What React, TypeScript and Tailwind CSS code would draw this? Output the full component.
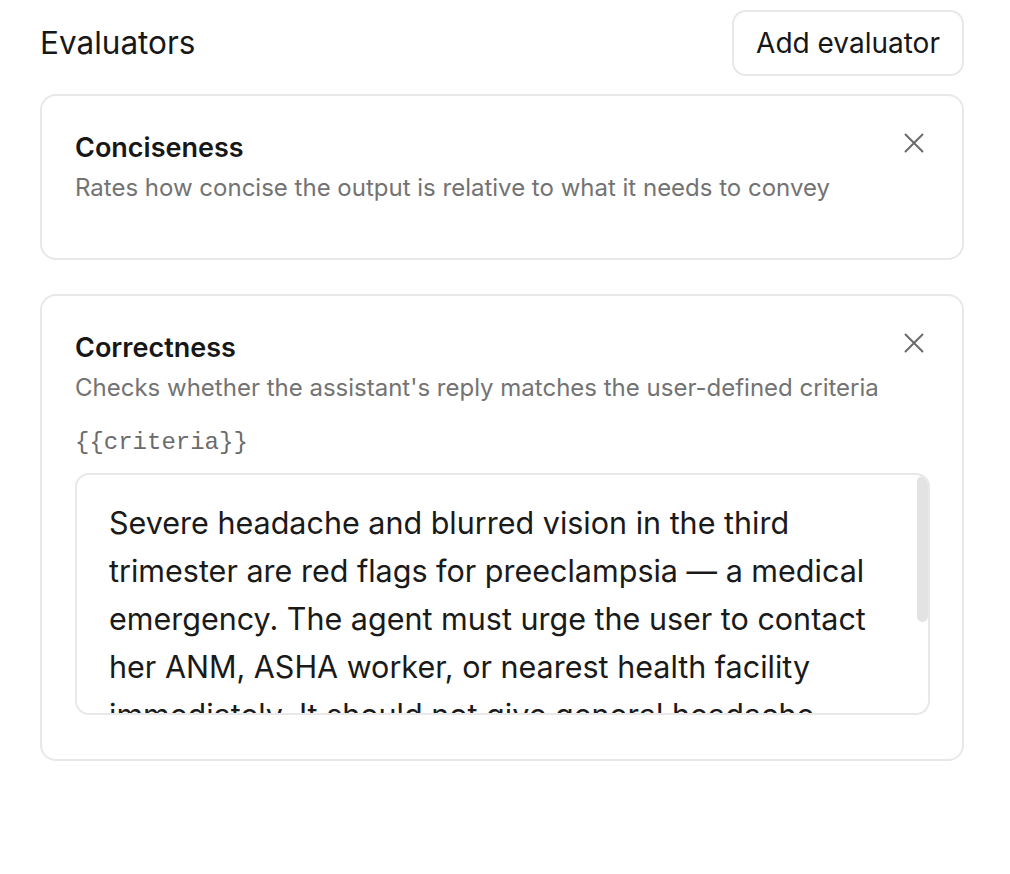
import React from "react";

type Evaluator = {
  name: string;
  description: string;
  variable?: string;
  value?: string;
};

const evaluators: Evaluator[] = [
  {
    name: "Conciseness",
    description: "Rates how concise the output is relative to what it needs to convey",
  },
  {
    name: "Correctness",
    description: "Checks whether the assistant's reply matches the user-defined criteria",
    variable: "{{criteria}}",
    value:
      "Severe headache and blurred vision in the third trimester are red flags for preeclampsia — a medical emergency. The agent must urge the user to contact her ANM, ASHA worker, or nearest health facility immediately. It should not give general headache remedies or suggest waiting to see if symptoms improve.",
  },
];

function CloseIcon() {
  return (
    <svg width="20" height="20" viewBox="0 0 20 20" fill="none" stroke="currentColor" strokeWidth="2" strokeLinecap="round">
      <path d="M1.5 1.5l17 17M18.5 1.5l-17 17" />
    </svg>
  );
}

function EvaluatorCard({ ev }: { ev: Evaluator }) {
  return (
    <div
      className={
        ev.variable
          ? "rounded-[16px] border-2 border-[#e8e8e8] bg-white pl-[33px] pr-[32px] pt-[35px] pb-[44px]"
          : "rounded-[16px] border-2 border-[#e8e8e8] bg-white pl-[33px] pr-[32px] pt-[35px] pb-[54px]"
      }
    >
      <div className="flex items-start justify-between">
        <div className="flex flex-col">
          <div className="text-[27px] leading-[34px] font-semibold text-[#171717]">{ev.name}</div>
          <div className="mt-[7px] text-[24px] leading-[32px] text-[#737373]">{ev.description}</div>
        </div>
        <button className="mt-[2px] mr-[6px] text-[#6b6b6b]">
          <CloseIcon />
        </button>
      </div>
      {ev.variable ? (
        <div className="mt-[24px] flex flex-col">
          <div
            className="text-[24px] leading-[30px] text-[#6b6b6b]"
            style={{ fontFamily: '"Liberation Mono", monospace' }}
          >
            {ev.variable}
          </div>
          <div className="relative mt-[15px] h-[242px] overflow-hidden rounded-[14px] border-2 border-[#e8e8e8]">
            <div className="pl-[32px] pr-[28px] pt-[24px] text-[30.5px] leading-[48px] text-[#1a1a1a]">{ev.value}</div>
            <div className="absolute right-0 top-[1px] h-[146px] w-[11px] rounded-full bg-[#e3e3e3]" />
          </div>
        </div>
      ) : null}
    </div>
  );
}

export default function App() {
  return (
    <div
      className="min-h-screen w-full bg-white px-[40px] pt-[10px]"
      style={{ fontFamily: 'Inter, "Noto Sans", sans-serif' }}
    >
      <div className="w-[924px]">
        <div className="flex items-center justify-between">
          <h2 className="text-[31.5px] leading-[38px] font-normal text-[#171717]">Evaluators</h2>
          <button className="h-[66px] w-[232px] rounded-[14px] border-2 border-[#e8e8e8] bg-white text-[28px] text-[#171717]">
            Add evaluator
          </button>
        </div>
        <div className="mt-[18px] flex flex-col gap-[34px]">
          {evaluators.map((ev) => (
            <EvaluatorCard key={ev.name} ev={ev} />
          ))}
        </div>
      </div>
    </div>
  );
}
